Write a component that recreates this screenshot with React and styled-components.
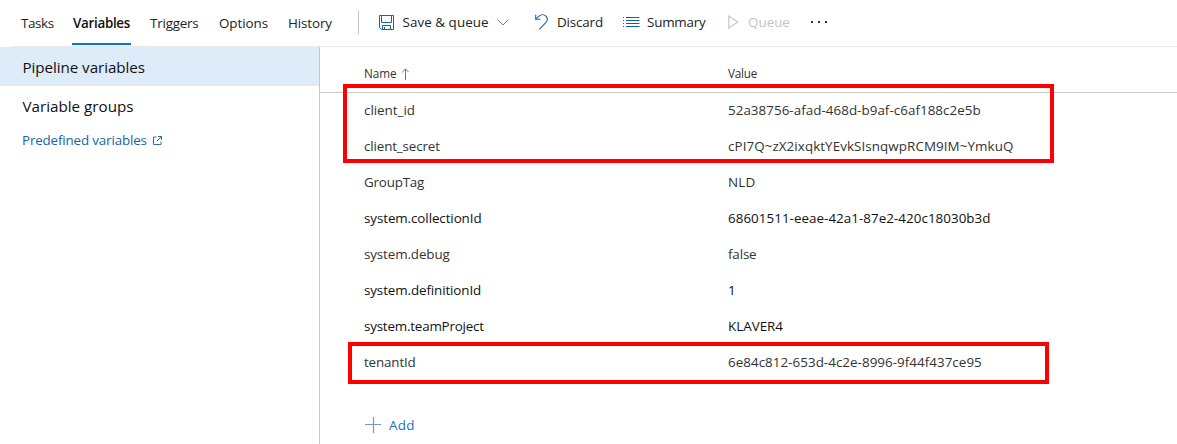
import React from "react";
import styled, { createGlobalStyle } from "styled-components";

const GlobalStyle = createGlobalStyle`
  * { box-sizing: border-box; }
  body {
    margin: 0;
    background: #fff;
    color: #222;
    font-family: "Open Sans", "Noto Sans", sans-serif;
    font-size: 13.4px;
    overflow: hidden;
  }
`;

const Page = styled.div`
  display: flex;
  flex-direction: column;
  width: 1177px;
  height: 444px;
  overflow: hidden;
`;

const TopBar = styled.header`
  display: flex;
  height: 47px;
  flex: none;
  margin-left: 11px;
  padding-left: 9px;
  border-bottom: 1px solid #eaeaea;
`;

const Label = styled.span`
  white-space: pre;
  letter-spacing: ${(p) => p.$track || 0}px;
`;

const Tabs = styled.nav`
  display: flex;
  width: 338px;
`;

const Tab = styled.a`
  width: ${(p) => p.$width}px;
  height: 45px;
  margin-right: ${(p) => p.$gap}px;
  padding-left: 1px;
  line-height: 46px;
  color: ${(p) => (p.$active ? "#111" : "#222")};
  font-weight: ${(p) => (p.$active ? 600 : 400)};
  border-bottom: 2px solid ${(p) => (p.$active ? "#0078d4" : "transparent")};
`;

const Toolbar = styled.div`
  display: flex;
  height: 24px;
  margin-top: 10px;
  padding-left: 20px;
  border-left: 1px solid #c8c8c8;
`;

const Action = styled.button`
  display: flex;
  align-items: center;
  width: ${(p) => p.$width}px;
  height: 24px;
  padding: 0;
  border: 0;
  background: none;
  font: inherit;
  line-height: 24px;
  color: ${(p) => (p.$disabled ? "#c4c4c4" : "#222")};
  svg { flex: none; }
  > svg { margin-right: ${(p) => p.$iconGap || 0}px; }
`;

const ChevronSlot = styled.span`
  display: flex;
  padding-left: 8px;
`;

const Body = styled.div`
  display: flex;
  flex: 1;
  min-height: 0;
`;

const Sidebar = styled.aside`
  width: 320px;
  flex: none;
  border-right: 1px solid #c8c8c8;
`;

const SideItem = styled.div`
  height: 39px;
  padding-left: 22.5px;
  font-size: 15.2px;
  line-height: 40px;
  color: #111;
  background: ${(p) => (p.$selected ? "#deecf9" : "transparent")};
`;

const SideLink = styled.a`
  display: flex;
  align-items: center;
  gap: 6px;
  height: 30px;
  padding-left: 22px;
  color: #1565a8;
`;

const Content = styled.main`
  flex: 1;
  position: relative;
`;

const Row = styled.div`
  display: grid;
  grid-template-columns: 364px 1fr;
  height: 36px;
  padding-left: 44px;
  line-height: 34px;
  color: ${(p) => (p.$system ? "#111" : "#333")};
`;

const HeadRow = styled(Row)`
  height: 46px;
  border-bottom: 1px solid #c8c8c8;
  font-size: 11.7px;
  line-height: 53px;
`;

const NameHead = styled.div`
  display: flex;
  svg { margin: 21px 0 0 4px; }
`;

const AddButton = styled.button`
  display: flex;
  align-items: center;
  gap: 8px;
  height: 36px;
  margin-top: 26px;
  padding: 0 0 0 45px;
  border: 0;
  background: none;
  font: inherit;
  color: #1a6fc4;
`;

const Highlight = styled.div`
  position: absolute;
  left: ${(p) => p.$x}px;
  top: ${(p) => p.$y}px;
  width: ${(p) => p.$w}px;
  height: ${(p) => p.$h}px;
  border: 4px solid #f00;
  pointer-events: none;
`;

const SaveIcon = () => (
  <svg width="15" height="15" viewBox="0 0 15 15" fill="none" stroke="#1467ab">
    <path d="M.5 .5H14.5V14.5H2.5L.5 12.5Z" />
    <path d="M2.5 .5V7.5H12.5V.5M3.5 14.5V10.5H11.5V14.5M5.5 12V14.5" />
  </svg>
);

const ChevronIcon = () => (
  <svg width="12" height="7" viewBox="0 0 12 7" fill="none" stroke="#94787c">
    <path d="M.5 .5L6 6L11.5 .5" />
  </svg>
);

const UndoIcon = () => (
  <svg width="13" height="16" viewBox="0 0 13 16" fill="none" stroke="#1a66b0" strokeWidth="1.1">
    <path d="M.7 .8V5.3H5.4" />
    <path d="M.8 5.2L4 2.2C6.2.2 9.2.3 11 2.2C12.8 4.2 12.6 6.8 10.8 8.7L4.3 15.3" />
  </svg>
);

const ListIcon = () => (
  <svg width="17" height="11" viewBox="0 0 17 11" stroke="#0f5fa5">
    <path d="M3 .5H16.5M3 3.5H16.5M3 6.5H16.5M3 9.5H16.5" />
    <path d="M0 .5H1M0 3.5H1M0 6.5H1M0 9.5H1" />
  </svg>
);

const PlayIcon = () => (
  <svg width="11" height="14" viewBox="0 0 11 14" fill="none" stroke="#c4c4c4" strokeWidth="1.1">
    <path d="M.7 1V13L9.8 7Z" />
  </svg>
);

const MoreIcon = () => (
  <svg width="18" height="2" viewBox="0 0 18 2" fill="#333">
    <path d="M0 0h2v2H0zM7 0h2v2H7zM14 0h2v2h-2z" />
  </svg>
);

const SortIcon = () => (
  <svg width="8" height="12" viewBox="0 0 8 12" fill="none" stroke="#77717c">
    <path d="M4.5 12V1M1.3 4.2L4.5 1L7.7 4.2" />
  </svg>
);

const ExternalIcon = () => (
  <svg width="9" height="9" viewBox="0 0 9 9" fill="none" stroke="#2a6fae">
    <path d="M3.5 1H.5V8.5H8V5.5M5 .5H8.5V4M8.3 .7L3.7 5.3" />
  </svg>
);

const PlusIcon = () => (
  <svg width="16" height="16" viewBox="0 0 16 16" stroke="#7c93cb" strokeWidth="1.2">
    <path d="M0 7.5H16M8.5 0V16" />
  </svg>
);

const tabs = [
  { text: "Tasks", width: 34, gap: 18, track: -0.4 },
  { text: "Variables", width: 59, gap: 18, track: -0.3 },
  { text: "Triggers", width: 51, gap: 18, track: -0.2 },
  { text: "Options", width: 51, gap: 18, track: -0.05 },
  { text: "History", width: 46, gap: 0, track: -0.1 },
];

const variables = [
  ["client_id", -0.02, "52a38756-afad-468d-b9af-c6af188c2e5b", 0.04],
  ["client_secret", -0.14, "cPI7Q~zX2ixqktYEvkSIsnqwpRCM9IM~YmkuQ", 0.08],
  ["GroupTag", -0.2, "NLD", 0.2],
  ["system.collectionId", -0.09, "68601511-eeae-42a1-87e2-420c18030b3d", 0.04, true],
  ["system.debug", -0.12, "false", -0.15],
  ["system.definitionId", -0.11, "1", 0, true],
  ["system.teamProject", -0.2, "KLAVER4", 0, true],
  ["tenantId", -0.15, "6e84c812-653d-4c2e-8996-9f44f437ce95", 0.04],
];

export default function App() {
  return (
    <Page>
      <GlobalStyle />
      <TopBar>
        <Tabs>
          {tabs.map((t) => (
            <Tab key={t.text} $width={t.width} $gap={t.gap} $active={t.text === "Variables"}>
              <Label $track={t.track}>{t.text}</Label>
            </Tab>
          ))}
        </Tabs>
        <Toolbar>
          <Action $width={156} $iconGap={8.5}>
            <SaveIcon />
            <Label $track={0.06}>Save &amp; queue</Label>
            <ChevronSlot><ChevronIcon /></ChevronSlot>
          </Action>
          <Action $width={88} $iconGap={9}>
            <UndoIcon />
            <Label $track={-0.15}>Discard</Label>
          </Action>
          <Action $width={105} $iconGap={7}>
            <ListIcon />
            <Label $track={-0.2}>Summary</Label>
          </Action>
          <Action $width={83} $iconGap={9}  $disabled disabled>
            <PlayIcon />
            <Label>Queue</Label>
          </Action>
          <Action $width={18} aria-label="More">
            <MoreIcon />
          </Action>
        </Toolbar>
      </TopBar>
      <Body>
        <Sidebar>
          <SideItem $selected><Label $track={-0.07}>Pipeline variables</Label></SideItem>
          <SideItem><Label $track={0}>Variable groups</Label></SideItem>
          <SideLink>
            <Label $track={-0.16}>Predefined variables</Label>
            <ExternalIcon />
          </SideLink>
        </Sidebar>
        <Content>
          <HeadRow>
            <NameHead><Label>Name</Label><SortIcon /></NameHead>
            <Label $track={-0.2}>Value</Label>
          </HeadRow>
          {variables.map(([name, nameTrack, value, valueTrack, system]) => (
            <Row key={name} $system={system}>
              <Label $track={nameTrack}>{name}</Label>
              <Label $track={valueTrack}>{value}</Label>
            </Row>
          ))}
          <AddButton>
            <PlusIcon />
            <Label $track={0.3}>Add</Label>
          </AddButton>
          <Highlight $x={23} $y={37} $w={711} $h={79} />
          <Highlight $x={28} $y={295} $w={701} $h={42} />
        </Content>
      </Body>
    </Page>
  );
}
